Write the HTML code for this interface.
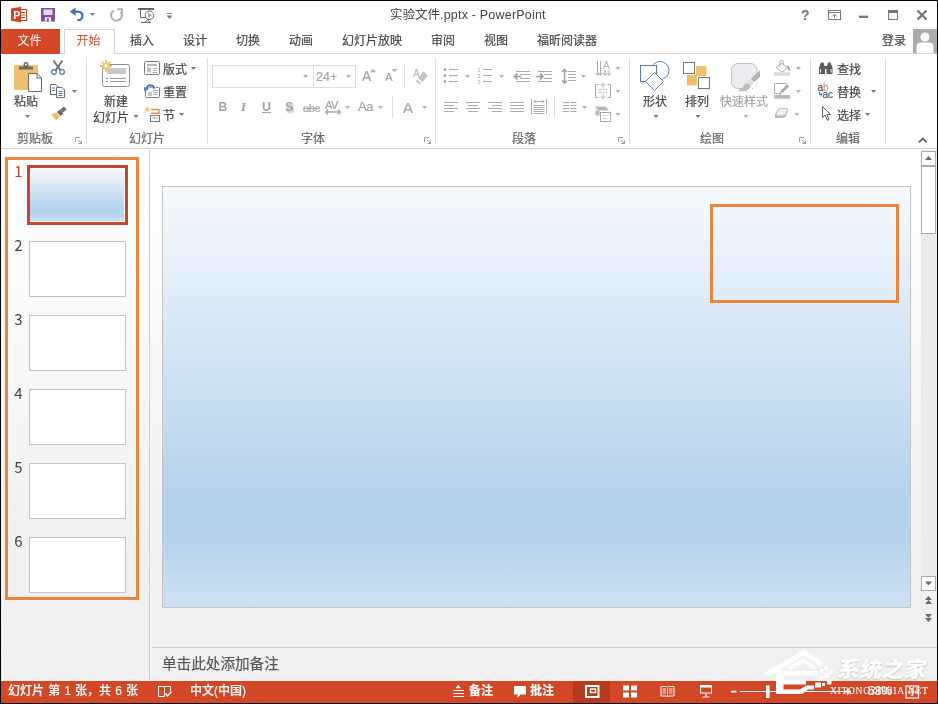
<!DOCTYPE html>
<html lang="zh-CN">
<head>
<meta charset="utf-8">
<title>实验文件.pptx - PowerPoint</title>
<style>
*{box-sizing:border-box;margin:0;padding:0}
html,body{width:938px;height:704px;overflow:hidden;background:#000}
body{font-family:"Liberation Sans","Noto Sans CJK SC",sans-serif;font-size:12px;color:#444;position:relative}
.a{position:absolute}
.t{position:absolute;white-space:nowrap;line-height:16px;height:16px;color:#444;-webkit-text-stroke:0.18px currentColor}
#win{left:1px;top:1px;width:936px;height:702px;background:#fff;overflow:hidden}
#pg{left:-1px;top:-1px;width:938px;height:704px;will-change:transform}
#tabs{left:1px;top:29px;width:936px;height:25px;background:#fff;border-bottom:1px solid #d6d6d6}
#filetab{left:1px;top:29px;width:59px;height:25px;background:#d24726;color:#fff;text-align:center;line-height:24px;text-indent:-2px}
#hometab{left:64px;top:29px;width:51px;height:25px;background:#fff;border:1px solid #d6d6d6;border-bottom:none;color:#d24726;text-align:center;line-height:23px;text-indent:-2px}
.tab{top:33px}
#ribbon{left:1px;top:54px;width:936px;height:95px;background:#fff;border-bottom:1px solid #d2d2d2}
.sep{position:absolute;width:1px;background:#dedede;top:58px;height:86px}
.sep2{position:absolute;width:1px;background:#dedede}
.gl{top:130.5px;color:#666}
.dis{color:#a3a3a3}
.r1{top:61.5px}.r2{top:84.5px}.r3{top:107.5px}
.b1{top:94px}.b2{top:109.5px}
#work{left:1px;top:149px;width:936px;height:532px;background:linear-gradient(#ffffff,#f8f8f8 40%,#f1f1f1 75%,#f0f0f0)}
#pdiv{left:149px;top:150px;width:1px;height:531px;background:#cfcfcf}
.th{left:29px;width:97px;height:56px;background:#fff;border:1px solid #c3c3c3}
.num{left:12px;width:13px;font-size:15px;color:#444;text-align:center;line-height:16px;height:16px;font-family:"Noto Sans CJK SC","Liberation Sans",sans-serif}
.grad{background:linear-gradient(#f7fafd 0%,#b5d2ec 74%,#b5d2ec 83%,#cee1f2 100%)}
#slide{left:162px;top:186px;width:749px;height:422px;border:1px solid #c4c4c4}
.sb{background:#fff;border:1px solid #ababab}
#status{left:1px;top:681px;width:936px;height:22px;background:#d24726}
.st{color:#fff;top:683px;font-weight:500}
svg{position:absolute;left:0;top:0;overflow:visible}
</style>
</head>
<body>
<div id="win" class="a"><div id="pg" class="a">
<div class="t" id="title" style="left:390px;top:7px;font-size:12.5px;-webkit-text-stroke:0">实验文件<span style="letter-spacing:0.2px">.pptx - PowerPoint</span></div>
<div class="t" style="left:801px;top:7px;font-size:14px;font-weight:bold;color:#777">?</div>
<div id="tabs" class="a"></div>
<div id="filetab" class="a">文件</div>
<div id="hometab" class="a">开始</div>
<div class="t tab" style="left:130px">插入</div>
<div class="t tab" style="left:183px">设计</div>
<div class="t tab" style="left:236px">切换</div>
<div class="t tab" style="left:289px">动画</div>
<div class="t tab" style="left:342px">幻灯片放映</div>
<div class="t tab" style="left:431px">审阅</div>
<div class="t tab" style="left:484px">视图</div>
<div class="t tab" style="left:537px">福昕阅读器</div>
<div class="t tab" style="left:882px">登录</div>
<div id="ribbon" class="a"></div>

<div class="sep" style="left:86px"></div>
<div class="sep" style="left:207px"></div>
<div class="sep" style="left:435px"></div>
<div class="sep" style="left:629px"></div>
<div class="sep" style="left:810px"></div>
<div class="sep" style="left:885px"></div>
<div class="sep2" style="left:404px;top:65px;height:23px"></div>
<div class="sep2" style="left:392px;top:96px;height:22px"></div>
<div class="sep2" style="left:554px;top:96px;height:22px"></div>
<div class="t b1" style="left:14px">粘贴</div>
<div class="t gl" style="left:17px">剪贴板</div>
<div class="t b1" style="left:104px">新建</div>
<div class="t b2" style="left:93px">幻灯片</div>
<div class="t r1" style="left:163px">版式</div>
<div class="t r2" style="left:163px">重置</div>
<div class="t r3" style="left:163px">节</div>
<div class="t gl" style="left:129px">幻灯片</div>
<div class="a" style="left:212px;top:65px;width:102px;height:23px;border:1px solid #dfdfdf"></div>
<div class="a" style="left:313px;top:65px;width:43px;height:23px;border:1px solid #dfdfdf"></div>
<div class="t dis" style="left:316px;top:69px;font-size:12.5px">24+</div>
<div class="t dis" style="left:362px;top:68px;font-size:14px">A</div>
<div class="t dis" style="left:385px;top:69px;font-size:11.5px">A</div>
<div class="t dis" style="left:218.5px;top:99px;font-size:12px;font-weight:bold;-webkit-text-stroke:0">B</div>
<div class="t dis" style="left:241px;top:99px;font-size:13px;font-style:italic;font-family:'Liberation Serif',serif;font-weight:bold">I</div>
<div class="t dis" style="left:262px;top:99px;font-size:12.5px;text-decoration:underline;font-weight:bold;-webkit-text-stroke:0">U</div>
<div class="t dis" style="left:285px;top:99px;font-size:13px;font-weight:bold;-webkit-text-stroke:0;text-shadow:1px 1.5px 1.5px #c4c4c4">S</div>
<div class="t dis" style="left:303px;top:100px;font-size:11px;text-decoration:line-through;letter-spacing:-0.3px">abc</div>
<div class="t dis" style="left:325px;top:97px;font-size:11px;letter-spacing:-0.6px">AV</div>
<div class="t dis" style="left:358px;top:99px;font-size:13px;letter-spacing:-0.4px">Aa</div>
<div class="t dis" style="left:403px;top:99.5px;font-size:15px">A</div>
<div class="t gl" style="left:301px">字体</div>
<div class="t gl" style="left:512px">段落</div>
<div class="t b1" style="left:643px">形状</div>
<div class="t b1" style="left:685px">排列</div>
<div class="t b1 dis" style="left:720px">快速样式</div>
<div class="t gl" style="left:700px">绘图</div>
<div class="t r1" style="left:837px">查找</div>
<div class="t r2" style="left:837px">替换</div>
<div class="t r3" style="left:837px">选择</div>
<div class="t gl" style="left:836px">编辑</div>

<svg width="938" height="704" viewBox="0 0 938 704">
<rect x="19.5" y="9.5" width="7" height="11" fill="#fff" stroke="#d04727"/>
<path d="M21 12.5h4M21 15h4M21 17.5h4" stroke="#d04727" stroke-width="1"/>
<path d="M11 8.6L21 6.8V22.6L11 20.8Z" fill="#d04727"/>
<text x="13.2" y="18.6" font-family="Liberation Sans,sans-serif" font-weight="bold" font-size="10.5" fill="#fff">P</text>
<rect x="41" y="8" width="14" height="13.5" fill="#7d519f"/>
<rect x="43.5" y="9.5" width="9" height="5.5" fill="#e3d8ee"/>
<rect x="45" y="17.3" width="6" height="4.2" fill="#fff"/><rect x="46.7" y="18.3" width="2.2" height="3.2" fill="#7d519f"/>
<path d="M73.5 11.6H78.2A4.3 4.3 0 0 1 82.5 15.9A4.3 4.3 0 0 1 78.2 20.2H77.5" stroke="#3f6fb6" stroke-width="2.2" fill="none"/>
<path d="M69.8 11.6L75.6 7.4V15.8Z" fill="#3f6fb6"/>
<path d="M90 13h5l-2.5 3z" fill="#777"/>
<path d="M120.6 11.8A5.4 5.4 0 1 1 114.2 10.3" stroke="#b2b2b2" stroke-width="2" fill="none"/>
<path d="M117.2 9.3H122V14" stroke="#b2b2b2" stroke-width="1.9" fill="none"/>
<path d="M138 9h16" stroke="#666" stroke-width="2"/>
<path d="M140.5 10V17.5H146" stroke="#666" fill="none"/>
<circle cx="149.5" cy="15.3" r="4.3" fill="#fff" stroke="#666"/>
<path d="M148 12.8L152 15.3L148 17.8Z" fill="#86b3a0"/>
<path d="M147.5 19.5L145 22.5M147.5 19.5L150 22.5M141 22.5H151" stroke="#666" fill="none"/>
<path d="M167 13.5H172" stroke="#777" stroke-width="1" fill="none"/>
<path d="M166.5 15.5h6l-3.0 3.5z" fill="#777"/>
<rect x="828.5" y="10.5" width="12" height="9" fill="#fff" stroke="#777"/>
<path d="M828.5 12.5h12" stroke="#777"/>
<path d="M834.5 18V14.5M832.5 16.3L834.5 14.2L836.5 16.3" stroke="#777" fill="none"/>
<rect x="859" y="15.6" width="9" height="2.4" fill="#777"/>
<rect x="888.5" y="10.5" width="9" height="9" fill="#fff" stroke="#777"/><rect x="888" y="10" width="10" height="3" fill="#777"/>
<path d="M917.5 10.5L926.5 19.5M926.5 10.5L917.5 19.5" stroke="#777" stroke-width="2.3"/>
<rect x="913" y="29" width="24" height="24" fill="#ababab"/>
<circle cx="925" cy="37" r="4.6" fill="#fff"/>
<path d="M916.5 53V46.5Q916.5 42.5 921 42.5H929Q933.5 42.5 933.5 46.5V53Z" fill="#fff"/>
<rect x="14" y="65" width="24" height="25" rx="1.5" fill="#ecc06c"/>
<path d="M19 69.5V66.5H23.5V64.5Q23.5 62 26 62Q28.5 62 28.5 64.5V66.5H33V69.5Z" fill="#6a6a6a"/><circle cx="26" cy="64.6" r="1" fill="#fff"/>
<path d="M28.5 73.5H37L41.5 78V91.5H28.5Z" fill="#fff" stroke="#6a6a6a"/><path d="M37 73.5V78H41.5" fill="none" stroke="#6a6a6a"/>
<path d="M25 115h5l-2.5 3z" fill="#777"/>
<path d="M53.5 60.5L60.5 70.5M62.5 60.5L55.5 70.5" stroke="#6a6a6a" stroke-width="1.8" fill="none"/>
<circle cx="54" cy="72" r="2.4" fill="#fff" stroke="#4a78b8" stroke-width="1.2"/><circle cx="62" cy="72" r="2.4" fill="#fff" stroke="#4a78b8" stroke-width="1.2"/>
<path d="M50.5 84.5H56L58.5 87V94.5H50.5Z" fill="#fff" stroke="#6a6a6a"/>
<path d="M56.5 87.5H62L64.5 90V97.5H56.5Z" fill="#fff" stroke="#6a6a6a"/>
<path d="M52 88h3M52 90.5h3M58.5 91.5h4M58.5 93.5h4M58.5 95.5h4" stroke="#4a78b8" stroke-width="1"/>
<path d="M72 90h5l-2.5 3z" fill="#777"/>
<path d="M60.5 109.5L64 106.5L66.5 109.5L63 112.5Z" fill="#6a6a6a"/>
<path d="M57 112L60 109.5L63.5 113.5L60.5 116Z" fill="#6a6a6a"/>
<path d="M51 114.5L56.5 112.5L60 116.5L56.5 120.5Z" fill="#ecc06c"/>
<path d="M75.5 142V137.5H80" stroke="#9c9c9c" fill="none"/><path d="M78 140L81.5 143.5M81.5 140.5V143.5H78.5" stroke="#9c9c9c" fill="none"/>
<rect x="102.5" y="64.5" width="27" height="22" rx="2" fill="#fff" stroke="#8c8c8c"/>
<rect x="107" y="68" width="19" height="6" fill="#c9c9c9"/>
<path d="M106 78.5h2M110 78.5h16M106 81.5h2M110 81.5h16" stroke="#9a9a9a"/>
<circle cx="106" cy="66" r="3.6" fill="#fff"/>
<path d="M106 60.2v3.4M106 68.4v3.4M100.2 66h3.4M108.4 66h3.4M101.9 61.9l2.4 2.4M107.7 67.7l2.4 2.4M110.1 61.9l-2.4 2.4M104.3 67.7l-2.4 2.4" stroke="#ecc06c" stroke-width="1.9"/>
<circle cx="106" cy="66" r="2.3" fill="#fff" stroke="#ecc06c" stroke-width="1.3"/>
<path d="M133.5 115h5l-2.5 3z" fill="#777"/>
<rect x="144.5" y="61.5" width="15" height="13" rx="1" fill="#fff" stroke="#7a7a7a"/>
<rect x="147" y="64" width="10" height="2" fill="#b5b5b5"/><rect x="147" y="67.5" width="4" height="5" fill="#c4c4c4"/><path d="M152.5 68.5h4.5M152.5 70.5h4.5M152.5 72.5h4.5" stroke="#a8a8a8"/>
<path d="M191 67h5l-2.5 3z" fill="#777"/>
<rect x="145.5" y="87.5" width="14" height="10" rx="1" fill="#fff" stroke="#7a7a7a"/>
<rect x="148" y="92" width="4" height="4" fill="#c4c4c4"/><path d="M153 90.5h5M153 92.5h5M153 94.5h5" stroke="#a8a8a8"/>
<path d="M146.2 89.2Q146.8 85.2 150.2 85.2Q153.6 85.4 154.6 88.6" stroke="#fff" stroke-width="3.6" fill="none"/>
<path d="M146.4 89Q147 85.4 150.2 85.3Q153.4 85.4 154.5 88.6" stroke="#4a78b8" stroke-width="1.9" fill="none"/><path d="M143.8 87L149.2 88.6L144.6 91.8Z" fill="#4a78b8"/>
<rect x="150.5" y="115.5" width="9" height="6" fill="#fff" stroke="#7a7a7a"/><rect x="152" y="117" width="6" height="1.6" fill="#c4c4c4"/>
<path d="M151 109.5H159V113.2H151" stroke="#e58b4a" stroke-width="1.4" fill="none"/>
<circle cx="147.2" cy="109.4" r="1.3" fill="#ecc06c"/><path d="M147.2 106.4v6M144.2 109.4h6M145.1 107.3l4.2 4.2M149.3 107.3l-4.2 4.2" stroke="#ecc06c" stroke-width="0.9"/>
<path d="M179 113h5l-2.5 3z" fill="#777"/>
<path d="M303 75h5l-2.5 3z" fill="#b0b0b0"/>
<path d="M346 75h5l-2.5 3z" fill="#b0b0b0"/>
<path d="M370 72.3l3-3.3l3 3.3z" fill="#b0b0b0"/>
<path d="M391.5 69h6l-3.0 3.2z" fill="#b0b0b0"/>
<text x="413" y="77" font-family="Liberation Sans,sans-serif" font-size="10" fill="#b0b0b0">A</text>
<path d="M418 78L423.5 71.5L428 75.5L422.5 82Z" fill="#c3c3c3"/><path d="M416.5 80.5L420.5 84" stroke="#b0b0b0" stroke-width="1.3"/>
<path d="M325.5 112h15M328 109.5l-2.5 2.5l2.5 2.5M338 109.5l2.5 2.5l-2.5 2.5" stroke="#a6a6a6" stroke-width="1.3" fill="none"/>
<path d="M345 106h5l-2.5 3z" fill="#b0b0b0"/>
<path d="M378 106h5l-2.5 3z" fill="#b0b0b0"/>
<path d="M422 106h5l-2.5 3z" fill="#b0b0b0"/>
<path d="M424.5 142V137.5H429" stroke="#9c9c9c" fill="none"/><path d="M427 140L430.5 143.5M430.5 140.5V143.5H427.5" stroke="#9c9c9c" fill="none"/>
<rect x="443.8" y="68.3" width="2.4" height="2.4" fill="#9c9c9c"/>
<path d="M449 69.5H458" stroke="#aaaaaa" stroke-width="1" fill="none"/>
<rect x="443.8" y="74.3" width="2.4" height="2.4" fill="#9c9c9c"/>
<path d="M449 75.5H458" stroke="#aaaaaa" stroke-width="1" fill="none"/>
<rect x="443.8" y="80.3" width="2.4" height="2.4" fill="#9c9c9c"/>
<path d="M449 81.5H458" stroke="#aaaaaa" stroke-width="1" fill="none"/>
<path d="M465 75h5l-2.5 3z" fill="#b0b0b0"/>
<text x="477.5" y="71.5" font-family="Liberation Sans,sans-serif" font-size="5.5" fill="#aaaaaa">1</text>
<path d="M483 69.5H492" stroke="#aaaaaa" stroke-width="1" fill="none"/>
<text x="477.5" y="77.5" font-family="Liberation Sans,sans-serif" font-size="5.5" fill="#aaaaaa">2</text>
<path d="M483 75.5H492" stroke="#aaaaaa" stroke-width="1" fill="none"/>
<text x="477.5" y="83.5" font-family="Liberation Sans,sans-serif" font-size="5.5" fill="#aaaaaa">3</text>
<path d="M483 81.5H492" stroke="#aaaaaa" stroke-width="1" fill="none"/>
<path d="M499 75h5l-2.5 3z" fill="#b0b0b0"/>
<path d="M516 71.5H530" stroke="#aaaaaa" stroke-width="1" fill="none"/>
<path d="M516 81.5H530" stroke="#aaaaaa" stroke-width="1" fill="none"/>
<path d="M520 74.5H530" stroke="#aaaaaa" stroke-width="1" fill="none"/>
<path d="M520 78.5H530" stroke="#aaaaaa" stroke-width="1" fill="none"/>
<path d="M514.5 76.5h7M517.5 73.5l-3 3l3 3" stroke="#a0a0a0" stroke-width="1.7" fill="none"/>
<path d="M538 71.5H552" stroke="#aaaaaa" stroke-width="1" fill="none"/>
<path d="M538 81.5H552" stroke="#aaaaaa" stroke-width="1" fill="none"/>
<path d="M544 74.5H552" stroke="#aaaaaa" stroke-width="1" fill="none"/>
<path d="M544 78.5H552" stroke="#aaaaaa" stroke-width="1" fill="none"/>
<path d="M536 76.5h7M540 73.5l3 3l-3 3" stroke="#a0a0a0" stroke-width="1.7" fill="none"/>
<path d="M564.5 69.5V83M562 72l2.5-2.7l2.5 2.7M562 80.5l2.5 2.7l2.5-2.7" stroke="#a0a0a0" stroke-width="1.4" fill="none"/>
<path d="M568 71.5H576" stroke="#aaaaaa" stroke-width="1" fill="none"/>
<path d="M568 74.5H576" stroke="#aaaaaa" stroke-width="1" fill="none"/>
<path d="M568 77.5H576" stroke="#aaaaaa" stroke-width="1" fill="none"/>
<path d="M568 80.5H576" stroke="#aaaaaa" stroke-width="1" fill="none"/>
<path d="M581 75h5l-2.5 3z" fill="#b0b0b0"/>
<path d="M597.5 61V75M600.5 61V75M595.5 73l2 2.3l2-2.3M598.5 73l2 2.3l2-2.3M605 70V75M609 70V75M603.3 73.3l1.7 2l1.7-2M607.3 73.3l1.7 2l1.7-2" stroke="#aaaaaa" fill="none"/>
<text x="603" y="69" font-family="Liberation Sans,sans-serif" font-size="10" fill="#aaaaaa">A</text>
<path d="M615.5 67h5l-2.5 3z" fill="#b0b0b0"/>
<path d="M598.5 84.5H595.5V97.5H598.5M607.5 84.5H610.5V97.5H607.5" stroke="#aaaaaa" fill="none"/>
<path d="M598 89.5h10M598 92.5h10" stroke="#c0c0c0" stroke-width="1.4" stroke-dasharray="1.5 1"/>
<path d="M603 83.5V87.5M601 85.5l2-2l2 2M603 94.5V98.5M601 96.5l2 2l2-2" stroke="#aaaaaa" fill="none"/>
<path d="M615.5 90h5l-2.5 3z" fill="#b0b0b0"/>
<path d="M595 106.5H606L609 110.5H598Z" fill="#b8b8b8"/><path d="M595.5 110.5H599.5V115.5H595.5Z" fill="#b8b8b8"/>
<rect x="600.5" y="112.5" width="10" height="9" fill="#fff" stroke="#aaaaaa"/><path d="M602.5 115.5h6M602.5 118.5h6" stroke="#c4c4c4" stroke-dasharray="1.5 1"/>
<path d="M615.5 113h5l-2.5 3z" fill="#b0b0b0"/>
<path d="M444 102.5H458" stroke="#aaaaaa" stroke-width="1" fill="none"/>
<path d="M466 102.5H480" stroke="#aaaaaa" stroke-width="1" fill="none"/>
<path d="M488 102.5H502" stroke="#aaaaaa" stroke-width="1" fill="none"/>
<path d="M510 102.5H524" stroke="#aaaaaa" stroke-width="1" fill="none"/>
<path d="M444 105.5H454" stroke="#aaaaaa" stroke-width="1" fill="none"/>
<path d="M468 105.5H478" stroke="#aaaaaa" stroke-width="1" fill="none"/>
<path d="M492 105.5H502" stroke="#aaaaaa" stroke-width="1" fill="none"/>
<path d="M510 105.5H524" stroke="#aaaaaa" stroke-width="1" fill="none"/>
<path d="M444 108.5H458" stroke="#aaaaaa" stroke-width="1" fill="none"/>
<path d="M466 108.5H480" stroke="#aaaaaa" stroke-width="1" fill="none"/>
<path d="M488 108.5H502" stroke="#aaaaaa" stroke-width="1" fill="none"/>
<path d="M510 108.5H524" stroke="#aaaaaa" stroke-width="1" fill="none"/>
<path d="M444 111.5H454" stroke="#aaaaaa" stroke-width="1" fill="none"/>
<path d="M468 111.5H478" stroke="#aaaaaa" stroke-width="1" fill="none"/>
<path d="M492 111.5H502" stroke="#aaaaaa" stroke-width="1" fill="none"/>
<path d="M510 111.5H524" stroke="#aaaaaa" stroke-width="1" fill="none"/>
<path d="M531.5 99V114M546.5 99V114" stroke="#aaaaaa" fill="none"/>
<path d="M534 101.5h10M536 99.5l-2 2l2 2M542 99.5l2 2l-2 2" stroke="#aaaaaa" fill="none"/>
<path d="M533.5 105.5H544.5" stroke="#aaaaaa" stroke-width="1" fill="none"/>
<path d="M533.5 107.5H544.5" stroke="#aaaaaa" stroke-width="1" fill="none"/>
<path d="M533.5 109.5H544.5" stroke="#aaaaaa" stroke-width="1" fill="none"/>
<path d="M533.5 111.5H544.5" stroke="#aaaaaa" stroke-width="1" fill="none"/>
<path d="M533.5 113.5H544.5" stroke="#aaaaaa" stroke-width="1" fill="none"/>
<path d="M563 102.5H569" stroke="#aaaaaa" stroke-width="1" fill="none"/>
<path d="M570.5 102.5H576.5" stroke="#aaaaaa" stroke-width="1" fill="none"/>
<path d="M563 105.5H569" stroke="#aaaaaa" stroke-width="1" fill="none"/>
<path d="M570.5 105.5H576.5" stroke="#aaaaaa" stroke-width="1" fill="none"/>
<path d="M563 108.5H569" stroke="#aaaaaa" stroke-width="1" fill="none"/>
<path d="M570.5 108.5H576.5" stroke="#aaaaaa" stroke-width="1" fill="none"/>
<path d="M563 111.5H569" stroke="#aaaaaa" stroke-width="1" fill="none"/>
<path d="M570.5 111.5H576.5" stroke="#aaaaaa" stroke-width="1" fill="none"/>
<path d="M582 106h5l-2.5 3z" fill="#b0b0b0"/>
<path d="M618.5 142V137.5H623" stroke="#9c9c9c" fill="none"/><path d="M621 140L624.5 143.5M624.5 140.5V143.5H621.5" stroke="#9c9c9c" fill="none"/>
<circle cx="660" cy="70.5" r="9" fill="#fff" stroke="#5b80b8"/>
<rect x="640.5" y="65.5" width="16" height="16" fill="#fff" stroke="#5b80b8"/>
<path d="M654.5 72.5L663.5 81.5L654.5 90.5L645.5 81.5Z" fill="#fff" stroke="#5b80b8"/>
<path d="M653.5 115h5l-2.5 3z" fill="#777"/>
<rect x="696" y="66" width="10.5" height="10" fill="#ecc06c"/><rect x="687" y="75" width="10" height="10.5" fill="#ecc06c"/>
<rect x="683.5" y="62.5" width="11" height="11" fill="#fff" stroke="#777"/><rect x="698.5" y="77.5" width="11" height="11" fill="#fff" stroke="#777"/>
<path d="M695.5 115h5l-2.5 3z" fill="#777"/>
<rect x="731.5" y="63.5" width="25.5" height="25" rx="6.5" fill="#eeeaf2" stroke="#c0c0c0"/>
<path d="M745 91L757.5 78.5V91Z" fill="#fff"/>
<path d="M760 70.3V76.5L754.3 82.3L750.6 78.9Z" fill="#b3b3b3"/>
<path d="M749.8 79.8L753.4 83.2L751.6 85L748 81.6Z" fill="#d9d9d9"/>
<path d="M738 91.3Q742 88.5 744 85Q746 82.3 748.6 83.6Q751.8 85.6 749.6 88.6Q748 91 744 91.3Z" fill="#bdbdbd"/>
<path d="M752 88.5Q756 87.5 757 83.5" stroke="#c0c0c0" fill="none" stroke-dasharray="2 1.5"/>
<path d="M743.5 115h5l-2.5 3z" fill="#b0b0b0"/>
<path d="M781.8 63.2L787.6 67.6L781.8 72.2L776.3 67.6Z" fill="#fff" stroke="#aaaaaa" stroke-linejoin="round"/>
<path d="M780 66.5V61.8Q780 60.4 781.6 60.4Q783.2 60.4 783.2 61.8V65.5" fill="none" stroke="#aaaaaa"/>
<path d="M786.5 65Q790.6 66.5 790 71.3Q787.6 70 787.3 67.6Z" fill="#9f9f9f"/>
<rect x="774" y="72.3" width="16" height="3.5" fill="#d9d9d9"/>
<path d="M796 67h5l-2.5 3z" fill="#b0b0b0"/>
<path d="M786.5 83.5H774.5V93.5H778" fill="none" stroke="#aaaaaa"/>
<path d="M780.3 91.3L787 84.2L789 86.2L782.3 93.3Z" fill="#ababab"/><path d="M779.7 92L781.7 94L778.6 95Z" fill="#8f8f8f"/>
<rect x="774" y="95.1" width="16" height="3.5" fill="#b7b7b7"/>
<path d="M796 90h5l-2.5 3z" fill="#b0b0b0"/>
<path d="M776.5 112.5Q777.5 108.6 780.5 108.6H786Q788.6 108.6 787.6 111.5L786.2 115.5Q785.3 118 782.5 118H776.6Q774 118 774.8 115.8Z" fill="#b9b9b9"/>
<path d="M777 111.5Q778 108.3 780.6 108.3H785.6Q788 108.3 787.2 110.6L786.2 113.6Q785.4 116 782.6 116H777.4Q775 116 775.8 113.8Z" fill="#efefef" stroke="#b0b0b0" stroke-width="0.9"/>
<path d="M794.5 113h5l-2.5 3z" fill="#b0b0b0"/>
<path d="M799.5 142V137.5H804" stroke="#9c9c9c" fill="none"/><path d="M802 140L805.5 143.5M805.5 140.5V143.5H802.5" stroke="#9c9c9c" fill="none"/>
<path d="M819 74V67.5L821 62.5H823.5L825 67.5V74ZM826.5 74V67.5L828 62.5H830.5L832.5 67.5V74Z" fill="#5a5a5a"/><rect x="824" y="66" width="3.5" height="3" fill="#5a5a5a"/><path d="M820.5 69V72.5M831 69V72.5" stroke="#fff" stroke-width="1"/>
<text x="817.5" y="91" font-family="Liberation Sans,sans-serif" font-size="10" fill="#5a5a5a" stroke="#5a5a5a" stroke-width="0.3">a<tspan fill="#c9a78f" stroke="#c9a78f">b</tspan></text>
<text x="822.5" y="98" font-family="Liberation Sans,sans-serif" font-size="10" fill="#5a5a5a" stroke="#5a5a5a" stroke-width="0.3">a<tspan fill="#3e6da8" stroke="#3e6da8">c</tspan></text>
<path d="M819.5 92V94.5H822M820.5 93l1.7 1.5l-1.7 1.5" stroke="#3e6da8" fill="none"/>
<path d="M871 90h5l-2.5 3z" fill="#777"/>
<path d="M822.5 106.5V117.5L825.2 115L827.3 120.3L829 119.5L826.9 114.5H830.6Z" fill="#fff" stroke="#5a5a5a" stroke-linejoin="round"/>
<path d="M865 113h5l-2.5 3z" fill="#777"/>
<path d="M918.8 142.3L922.8 138.5L926.8 142.3" stroke="#666" stroke-width="1.8" fill="none"/>
</svg>

<div id="work" class="a"></div>
<div id="pdiv" class="a"></div>
<div class="a" style="left:5px;top:157px;width:134px;height:443px;border:3px solid #ea8540"></div>
<div class="a grad" style="left:27px;top:165px;width:101px;height:60px;border:3px solid #c5482a;box-shadow:inset -1px -1px 0 #fff"></div>
<div class="a num" style="top:163px;color:#c5482a">1</div>
<div class="a th" style="top:241px"></div>
<div class="a num" style="top:236.5px">2</div>
<div class="a th" style="top:315px"></div>
<div class="a num" style="top:310.5px">3</div>
<div class="a th" style="top:389px"></div>
<div class="a num" style="top:384.5px">4</div>
<div class="a th" style="top:463px"></div>
<div class="a num" style="top:458.5px">5</div>
<div class="a th" style="top:537px"></div>
<div class="a num" style="top:532.5px">6</div>
<div id="slide" class="a grad"></div>
<div class="a" style="left:710px;top:204px;width:189px;height:99px;border:3px solid #e9853f"></div>
<div class="a" style="left:921px;top:150px;width:16px;height:441px;background:#ebebeb"></div>
<div class="a sb" style="left:921px;top:151px;width:15px;height:15px"></div>
<div class="a sb" style="left:921px;top:166px;width:15px;height:68px"></div>
<div class="a sb" style="left:921px;top:576px;width:15px;height:15px"></div>
<div class="a" style="left:152px;top:647px;width:785px;height:1px;background:#cdcdcd"></div>
<div class="t" style="left:162px;top:655px;font-size:14.6px;line-height:18px;height:18px;color:#555">单击此处添加备注</div>

<div id="status" class="a"></div>
<div class="a" style="left:573px;top:681px;width:37px;height:22px;background:#b63b1c"></div>
<div class="t st" style="left:8px;word-spacing:0.8px">幻灯片 第 1 张，共 6 张</div>
<div class="t st" style="left:190px">中文(中国)</div>
<div class="t st" style="left:469px;font-weight:bold">备注</div>
<div class="t st" style="left:530px;font-weight:bold">批注</div>
<div class="t st" style="left:868px">58%</div>
<div class="t" style="left:838px;top:656px;font-size:21.5px;line-height:28px;height:28px;font-weight:900;transform:skewX(-9deg);letter-spacing:0.8px;color:#fff;text-shadow:0 1px 2px rgba(120,120,120,.45)">系统之家</div>
<div class="t" style="left:830px;top:683px;font-family:'Liberation Serif',serif;font-size:9.5px;letter-spacing:0.75px;color:#fff;opacity:.9">XITONGZHIJIA.NET</div>

<svg width="938" height="704" viewBox="0 0 938 704">
<g fill="#fff">
<path d="M763 673.5L804 649.5L821 660.5L818 664.5L804 655.5L770 676.5Z"/>
<path d="M787 667L803.5 658L816 666L813.5 669.5L803.5 663L790 670.5Z"/>
<path d="M776 671H818V675.5H783.5V680H806V684.5H783.5V689.5H800L806 685.5H814V689.5H808L802 694H776Z"/>
<rect x="818" y="662" width="4.5" height="4.5"/><rect x="824" y="666" width="4" height="4"/><rect x="829" y="670.5" width="3.5" height="3.5"/><rect x="820" y="669" width="3.5" height="3.5"/><rect x="824" y="673" width="5" height="5"/><rect x="818" y="676" width="5" height="4.5"/><rect x="827" y="680" width="4.5" height="4.5"/><rect x="815" y="682.5" width="6" height="5"/><rect x="822" y="683" width="3" height="3"/>
</g>
<path d="M158.5 686.5H164.5V696.5H158.5ZM164.5 686.5H170.5V691" stroke="#fff" fill="none"/>
<path d="M165.5 693.5L167.5 696L171.5 691.5" stroke="#fff" stroke-width="1.4" fill="none"/>
<path d="M458.2 685L461.2 688.3H455.2Z" fill="#fff"/><path d="M453 690.5H464M453 693.5H464M453 696.5H464" stroke="#fff" stroke-width="1.2"/>
<path d="M514 686H526V694.5H520.5L517.5 698V694.5H514Z" fill="#fff"/>
<rect x="586" y="686" width="12.5" height="11" fill="none" stroke="#fff" stroke-width="2"/><rect x="590.5" y="689" width="5" height="3.5" fill="none" stroke="#fff" stroke-width="1.4"/>
<rect x="623" y="685.5" width="6" height="5" fill="#fff"/>
<rect x="623" y="692.5" width="6" height="5" fill="#fff"/>
<rect x="631" y="685.5" width="6" height="5" fill="#fff"/>
<rect x="631" y="692.5" width="6" height="5" fill="#fff"/>
<path d="M661 686.5H666.5L667.5 687.5L668.5 686.5H674V696H668.5L667.5 697L666.5 696H661Z" fill="none" stroke="#fff"/><path d="M667.5 687.5V697M662.5 689h3.5M662.5 691h3.5M662.5 693h3.5M669 689h3.5M669 691h3.5M669 693h3.5" stroke="#fff" stroke-width="0.9"/>
<rect x="700.5" y="687" width="11" height="6" fill="none" stroke="#fff"/><path d="M700 686H712" stroke="#fff" stroke-width="2"/><path d="M706 693.5V696.5M702.5 697H709.5" stroke="#fff" stroke-width="1.2"/>
<rect x="731" y="690.7" width="5.5" height="1.8" fill="#fff"/>
<path d="M740 691.5H844" stroke="#fff" stroke-width="1"/>
<rect x="766" y="685.5" width="3.6" height="12.5" fill="#fff"/>
<path d="M844.5 691.6H851M847.7 688.4V694.8" stroke="#fff" stroke-width="1.8"/>
<rect x="906" y="686" width="12.5" height="12" fill="none" stroke="#fff" stroke-width="1.2"/>
<path d="M912.2 688V696M908 692H916.5M910.8 689.5l1.4-1.5l1.4 1.5M910.8 694.5l1.4 1.5l1.4-1.5M909.5 690.6l-1.5 1.4l1.5 1.4M915 690.6l1.5 1.4l-1.5 1.4" stroke="#fff" stroke-width="0.9" fill="none"/>
<path d="M925 160L928.5 156L932 160Z" fill="#666"/>
<path d="M925 581.5L932 581.5L928.5 585.5Z" fill="#666"/>
<path d="M928.5 596L932 600H925ZM928.5 600L932 604H925ZM925 614H932L928.5 618ZM925 618H932L928.5 622Z" fill="#6a6a6a"/>
</svg>

</div></div>
</body>
</html>
